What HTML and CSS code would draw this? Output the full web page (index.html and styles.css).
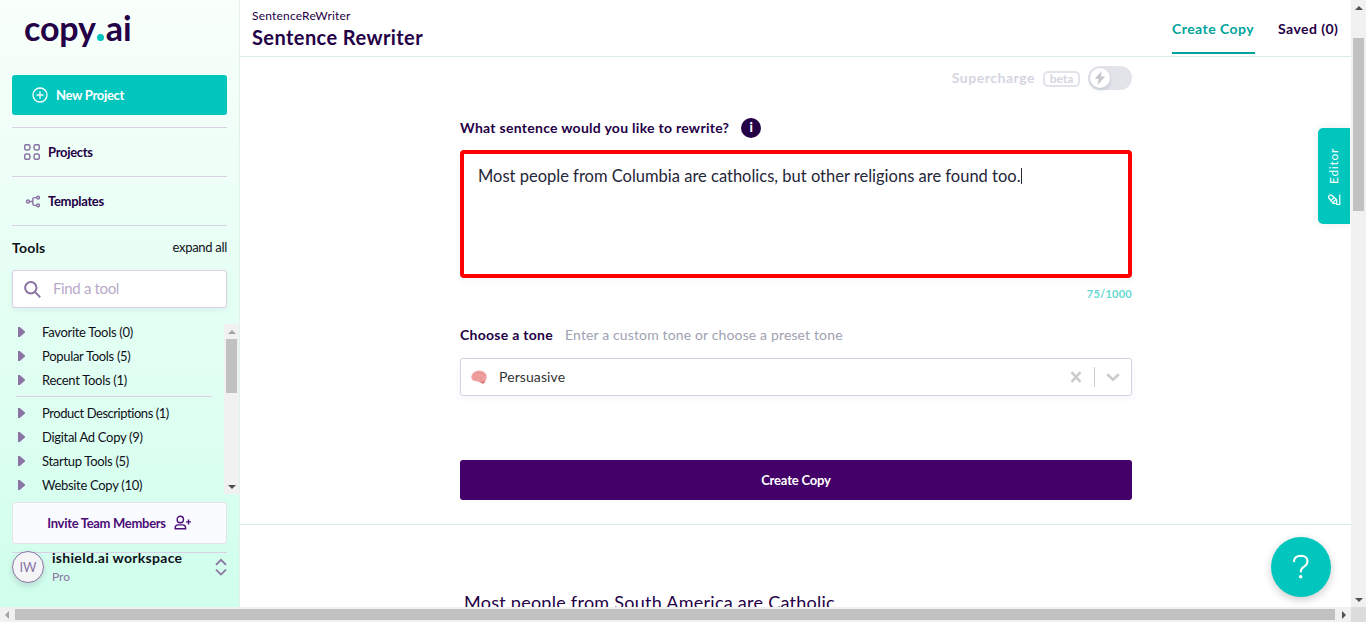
FILE: index.html
```html
<!DOCTYPE html>
<html lang="en">
<head>
<meta charset="utf-8">
<title>Sentence Rewriter</title>
<link rel="stylesheet" href="styles.css">
</head>
<body>
<div class="window">
  <aside class="sidebar">
    <div class="logo">copy<span class="logo-dot"></span>ai</div>
    <button class="new-project">
      <svg width="16" height="16" viewBox="0 0 16 16" fill="none" stroke="#fff" stroke-width="1.3"><circle cx="8" cy="8" r="7"/><path d="M8 4.5v7M4.5 8h7"/></svg>
      <span>New Project</span>
    </button>
    <nav class="nav">
      <a class="nav-item">
        <svg width="16" height="16" viewBox="0 0 16 16" fill="none" stroke="#8b74a4" stroke-width="1.5"><rect x=".7" y=".7" width="5.2" height="5.2" rx="1.6"/><rect x="10.1" y=".7" width="5.2" height="5.2" rx="1.6"/><rect x=".7" y="10.1" width="5.2" height="5.2" rx="1.6"/><rect x="10.1" y="10.1" width="5.2" height="5.2" rx="1.6"/></svg>
        <span>Projects</span>
      </a>
      <a class="nav-item">
        <svg width="16" height="16" viewBox="0 0 16 16" fill="none" stroke="#8b74a4" stroke-width="1.4"><circle cx="4" cy="8.5" r="1.5"/><circle cx="14" cy="4.6" r="1.4"/><circle cx="14" cy="12.4" r="1.4"/><path d="M5.6 8.500h3.200M12.500 4.600H10.300Q8.800 4.600 8.800 6v5q0 1.400 1.500 1.400h2.200"/></svg>
        <span>Templates</span>
      </a>
    </nav>
    <div class="tools-head"><span class="tools-title">Tools</span><span class="expand">expand all</span></div>
    <div class="search">
      <svg width="17" height="17" viewBox="0 0 17 17" fill="none" stroke="#8b74a4" stroke-width="2"><circle cx="6.8" cy="6.8" r="5.700"/><path d="M10.900 10.900l5.300 5.300"/></svg>
      <span>Find a tool</span>
    </div>
    <div class="tools">
      <ul class="tool-list">
        <li>Favorite Tools (0)</li>
        <li>Popular Tools (5)</li>
        <li class="last">Recent Tools (1)</li>
        <li class="long">Product Descriptions (1)</li>
        <li>Digital Ad Copy (9)</li>
        <li>Startup Tools (5)</li>
        <li>Website Copy (10)</li>
      </ul>
      <div class="scroll-v tool-scroll"><i class="arrow up dim"></i><i class="thumb"></i><i class="arrow down"></i></div>
    </div>
    <button class="invite">
      <span>Invite Team Members</span>
      <svg width="18" height="16" viewBox="0 0 18 16" fill="none" stroke="#4b0d78" stroke-width="1.4"><circle cx="6.300" cy="4.500" r="3.200"/><path d="M1.200 13.800v-.9q0-3 3-3h4.400q3 0 3 3v.9zM14.500 4.400v5M12 6.900h5"/></svg>
    </button>
    <div class="account">
      <span class="avatar">IW</span>
      <div class="account-text"><span class="workspace">ishield.ai workspace</span><span class="plan">Pro</span></div>
      <svg class="sort" width="12" height="18" viewBox="0 0 12 18" fill="none" stroke="#8b74a4" stroke-width="1.8"><path d="M1 6.800l5-5 5 5M1 11.600l5 5 5-5"/></svg>
    </div>
  </aside>
  <main class="main">
    <header class="header">
      <div class="titles"><span class="crumb">SentenceReWriter</span><h1>Sentence Rewriter</h1></div>
      <div class="tabs"><span class="tab active">Create Copy</span><span class="tab saved">Saved (0)</span></div>
    </header>
    <section class="form">
      <div class="super">
        <span class="super-label">Supercharge</span>
        <span class="beta">beta</span>
        <span class="toggle"><span class="knob"><svg width="12" height="14" viewBox="0 0 12 14" fill="#c4c6cb"><path d="M7.700 0L.8 7.700h4L3.400 14l7.800-8.600H6.800z"/></svg></span></span>
      </div>
      <div class="question"><span class="question-text">What sentence would you like to rewrite?</span><b class="info">i</b></div>
      <div class="textarea"><span>Most people from Columbia are catholics, but other religions are found too.</span><i class="caret"></i></div>
      <div class="count">75/1000</div>
      <div class="tone-head"><span class="tone-label">Choose a tone</span><span class="tone-hint">Enter a custom tone or choose a preset tone</span></div>
      <div class="select">
        <svg class="brain" width="16" height="14" viewBox="0 0 16 14"><path d="M.9 9.500Q-.3 7 .9 4.700 2 1.900 5 1.200 8 0 11 .9q3 .8 4 3.300 1.400 2.800.1 5.100-.2 1.700-1.100 2.400-.2 1.500-1.700 1.700-2.100.2-3.600-1.500Q6.900 12 4.900 10.900 2 11.200.9 9.500z" fill="#f0a09f"/><path d="M2.500 4.800q2-.6 2.200 1M5 2.800q2 0 2 1.700M8.300 2q.2 2 2.500 1.500M11.500 4.500q2-.5 2.400 1.500M3 8q1.500.8 2.800-.5M7 6.500q1 2 3 .5M8.500 10q1.600-1.800 3.500-1" fill="none" stroke="#d98085" stroke-width=".6"/><path d="M9.200 11.200q2 .6 4.800.3-.2 1.700-1.700 1.900-1.900.2-3.100-2.200z" fill="#cb7475"/></svg>
        <span class="tone">Persuasive</span>
        <svg width="12" height="12" viewBox="0 0 12 12" stroke="#ccc" stroke-width="2.700" fill="none"><path d="M1.500 1.200l9 9.600M10.500 1.200l-9 9.600"/></svg>
        <i class="divider"></i>
        <svg width="14" height="9" viewBox="0 0 14 9" stroke="#ccc" stroke-width="2.600" stroke-linecap="round" fill="none"><path d="M2 2l5 4.800L12 2"/></svg>
      </div>
      <button class="create">Create Copy</button>
    </section>
    <section class="results"><p>Most people from South America are Catholic</p></section>
    <div class="editor-tab"><svg width="13" height="11" viewBox="0 0 13 11" fill="none" stroke="#fff" stroke-width="1.200"><path d="M1.200 1.700q1.400-1.400 2.700-.2l4.800 4.300v3.600H5.200L1.200 4.500q-1.200-1.400 0-2.800zM3.200 6.300l2.900-3M5.300 8l2.800-2.900M11.800.5v10H8"/></svg><span>Editor</span></div>
    <div class="help"><svg width="18" height="26" viewBox="0 0 18 26" fill="none" stroke="#fff" stroke-width="2.100" stroke-linecap="round"><path d="M2 7.300Q2.300 2 8.800 1.800q6.500 0 6.700 5.500 0 3.400-3.700 5.500-3 1.700-3 4.700"/><circle cx="8.700" cy="22.800" r="1.800" fill="#fff" stroke="none"/></svg></div>
  </main>
  <div class="scroll-v page-scroll"><i class="arrow up"></i><i class="thumb"></i><i class="arrow down"></i></div>
  <div class="scroll-h"><i class="arrow left dim"></i><i class="thumb"></i><i class="arrow right"></i></div>
  <div class="corner"></div>
</div>
</body>
</html>
```
FILE: styles.css
```css
* { box-sizing: border-box; }
body { margin: 0; font-family: Lato, "Liberation Sans", sans-serif; color: #240046; }
button { font: inherit; border: 0; padding: 0; }
svg { flex: none; display: block; }
.window { display: grid; grid-template: 607px 15px / 240px 1111px 15px; width: 1366px; height: 622px; overflow: hidden; background: #fff; }
.sidebar { display: flex; flex-direction: column; padding: 0 12px; border-right: 1px solid #e2f1e9; background: linear-gradient(#f9fffb, #d0ffec); overflow: hidden; }
.logo { display: flex; align-items: baseline; height: 75px; padding: 8px 0 0 12px; font-size: 34px; line-height: 40px; font-weight: 700; letter-spacing: -.15px; color: #240046; }
.logo-dot { width: 7px; height: 7px; margin: 0 2px 0 1px; border-radius: 50%; background: #00c4bc; }
.new-project { flex: none; display: flex; align-items: center; gap: 8px; width: 215px; height: 40px; padding-left: 20px; border-radius: 3px; background: #00c6be; color: #fff; font-size: 13px; font-weight: 700; letter-spacing: -.3px; }
.nav { margin-top: 12px; width: 215px; border-top: 1px solid #dacfe6; }
.nav-item { display: flex; align-items: center; gap: 8px; height: 49px; padding-left: 12px; border-bottom: 1px solid #dacfe6; font-size: 13px; font-weight: 700; letter-spacing: -.3px; }
.tools-head { display: flex; justify-content: space-between; align-items: center; width: 215px; height: 44px; padding-bottom: 2px; color: #10101a; }
.tools-title { font-size: 14px; font-weight: 700; letter-spacing: .2px; }
.expand { font-size: 13px; letter-spacing: -.3px; }
.search { flex: none; display: flex; align-items: center; gap: 12px; width: 215px; height: 38px; padding-left: 11px; border: 1px solid #dacfe6; border-radius: 3px; background: #fff; box-shadow: 0 2px 6px #24004610; color: #b9aac8; font-size: 15px; letter-spacing: -.35px; }
.search span { padding-bottom: 2px; }
.tools { display: flex; height: 170px; margin: 16px -12px 0 0; overflow: hidden; }
.tool-list { list-style: none; width: 212px; margin: -4px 0 0; padding: 0; font-size: 13px; letter-spacing: -.3px; color: #10101a; }
.tool-list li { display: flex; align-items: center; height: 24px; }
.tool-list li::before { content: ""; width: 7px; height: 10px; margin: 0 17px 0 6px; background: #8b74a4; clip-path: polygon(0 0, 25% 0, 100% 45%, 100% 55%, 25% 100%, 0 100%); }
.tool-list .long { letter-spacing: -.45px; }
.tool-list .last { width: 196px; height: 29px; margin: 0 12px 4px 4px; padding-bottom: 4px; border-bottom: 1px solid #dacfe6; }
.tool-list .last::before { margin-left: 2px; }
.scroll-v { display: flex; flex-direction: column; align-items: center; justify-content: space-between; width: 15px; background: #f1f1f1; }
.scroll-v .thumb { width: 11px; background: #c1c1c1; }
.arrow { border: 4px solid transparent; }
.up { border-top: 0; border-bottom-color: #505050; margin: 6px 0 5px; }
.down { border-bottom: 0; border-top-color: #505050; margin: auto 0 5px; }
.up.dim { border-bottom-color: #a3a3a3; }
.tool-scroll .thumb { height: 54px; }
.invite { flex: none; display: flex; justify-content: center; align-items: center; gap: 8px; width: 215px; height: 42px; margin-top: 8px; border: 1px solid #e5e1ed; border-radius: 3px; background: #fafbff; color: #4b0d78; font-size: 13px; font-weight: 700; letter-spacing: -.3px; }
.account { display: flex; width: 215px; margin-top: 8px; border-top: 1px solid #dacfe6; }
.avatar { width: 32px; height: 32px; margin-top: -2px; border: 1px solid #8b74a4; border-radius: 50%; background: #f5f5f8; box-shadow: 0 3px 6px #24004625; color: #8b74a4; font-size: 13px; line-height: 31px; text-align: center; }
.account-text { display: flex; flex-direction: column; flex: 1; padding-left: 8px; margin-top: -5px; }
.workspace { font-size: 14px; font-weight: 700; line-height: 20px; letter-spacing: .3px; color: #10101a; }
.plan { font-size: 12px; line-height: 17px; color: #8b74a4; }
.sort { margin: 5px 0 0; }
.main { position: relative; display: flex; flex-direction: column; overflow: hidden; }
.header { flex: none; display: flex; justify-content: space-between; height: 57px; padding: 0 12px; border-bottom: 1px solid #d8efe0; }
.titles { display: flex; flex-direction: column; padding-top: 8px; }
.crumb { font-size: 12px; line-height: 16px; letter-spacing: .2px; }
h1 { margin: 0; font-size: 20px; line-height: 26px; font-weight: 700; letter-spacing: .42px; }
.tabs { display: flex; gap: 23px; }
.tab { height: 54px; font-size: 14px; line-height: 57px; font-weight: 700; letter-spacing: .45px; white-space: nowrap; }
.active { border-bottom: 2px solid #00a39b; color: #00a39b; width: 83px; }
.saved { width: 61px; }
.form { flex: none; height: 468px; padding: 0 219px 0 220px; border-bottom: 1px solid #d8efe0; }
.super { display: flex; align-items: center; justify-content: flex-end; height: 24px; margin-top: 9px; gap: 8px; color: #d4d6df; font-weight: 700; font-size: 14px; }
.super-label { letter-spacing: .52px; padding-bottom: 1px; }
.beta { width: 37px; height: 16px; margin-top: 2px; border: 2px solid #e3e4ea; border-radius: 5px; font-size: 12px; line-height: 12px; text-align: center; }
.toggle { width: 44px; height: 24px; padding: 2px 0 0 2px; border-radius: 12px; background: #e3e4ea; }
.knob { display: flex; align-items: center; justify-content: center; width: 20px; height: 20px; border-radius: 50%; background: #fff; box-shadow: 0 2px 4px #24506030; }
.question { display: flex; align-items: center; gap: 12px; height: 20px; margin-top: 28px; font-size: 14px; font-weight: 700; }
.question-text { letter-spacing: .28px; padding-bottom: 2px; }
.info { width: 20px; height: 20px; border-radius: 50%; background: #240046; color: #fff; font-size: 13px; line-height: 19px; text-align: center; }
.textarea { display: flex; width: 672px; height: 128px; margin-top: 12px; padding: 12px 14px; border: 4px solid #f00; border-radius: 4px; box-shadow: 0 3px 7px #2450600c; color: #252638; font-size: 16.5px; line-height: 20px; white-space: nowrap; }
.caret { width: 1px; height: 16px; margin-top: 2px; background: #252638; }
.count { height: 16px; margin-top: 8px; color: #65d8d2; font-size: 11px; line-height: 16px; font-weight: 700; letter-spacing: .25px; text-align: right; }
.tone-head { display: flex; gap: 12px; height: 20px; margin-top: 23px; font-size: 14px; line-height: 20px; white-space: nowrap; }
.tone-label { font-weight: 700; letter-spacing: .28px; }
.tone-hint { color: #9ea2b3; letter-spacing: .14px; }
.select { display: flex; align-items: center; width: 672px; height: 38px; margin-top: 13px; padding: 0 11px 0 10px; border: 1px solid #dacfe6; border-radius: 3px; box-shadow: 0 3px 7px #2450600c; color: #333; font-size: 14px; }
.tone { margin-left: 12px; padding-bottom: 2px; flex: 1; letter-spacing: .1px; }
.divider { width: 1px; height: 20px; margin: 0 11px 0 12px; background: #ccc; }
.create { display: block; width: 672px; height: 40px; margin-top: 64px; border-radius: 3px; background: #430068; color: #fff; font-size: 13px; font-weight: 700; letter-spacing: -.18px; }
.results { padding: 65px 0 0 224px; }
.results p { margin: 0; font-size: 18px; line-height: 24px; letter-spacing: .26px; white-space: nowrap; }
.editor-tab { position: absolute; right: 1px; top: 128px; display: flex; flex-direction: column; align-items: center; width: 32px; height: 96px; padding-top: 20px; border-radius: 5px 0 0 5px; background: #00c6be; box-shadow: 0 0 8px #00403018; color: #fff; font-size: 12px; letter-spacing: .7px; }
.editor-tab svg { order: 2; margin-top: 10px; }
.editor-tab span { writing-mode: vertical-rl; transform: rotate(180deg); line-height: 16px; }
.help { position: absolute; right: 20px; top: 537px; display: flex; align-items: center; justify-content: center; width: 60px; height: 60px; border-radius: 50%; background: #00c6be; box-shadow: 0 3px 8px #0003; }
.page-scroll .thumb { height: 173px; margin-top: 28px; }
.page-scroll .up { margin-bottom: 0; }
.scroll-h { grid-column: 1 / 3; display: flex; align-items: center; background: #f1f1f1; }
.scroll-h .thumb { width: 1320px; height: 11px; background: #c1c1c1; }
.left { border-left: 0; border-right-color: #a3a3a3; margin: 0 6px 0 5px; }
.right { border-right: 0; border-left-color: #505050; margin-left: 7px; }
.corner { background: #dcdcdc; }
```
